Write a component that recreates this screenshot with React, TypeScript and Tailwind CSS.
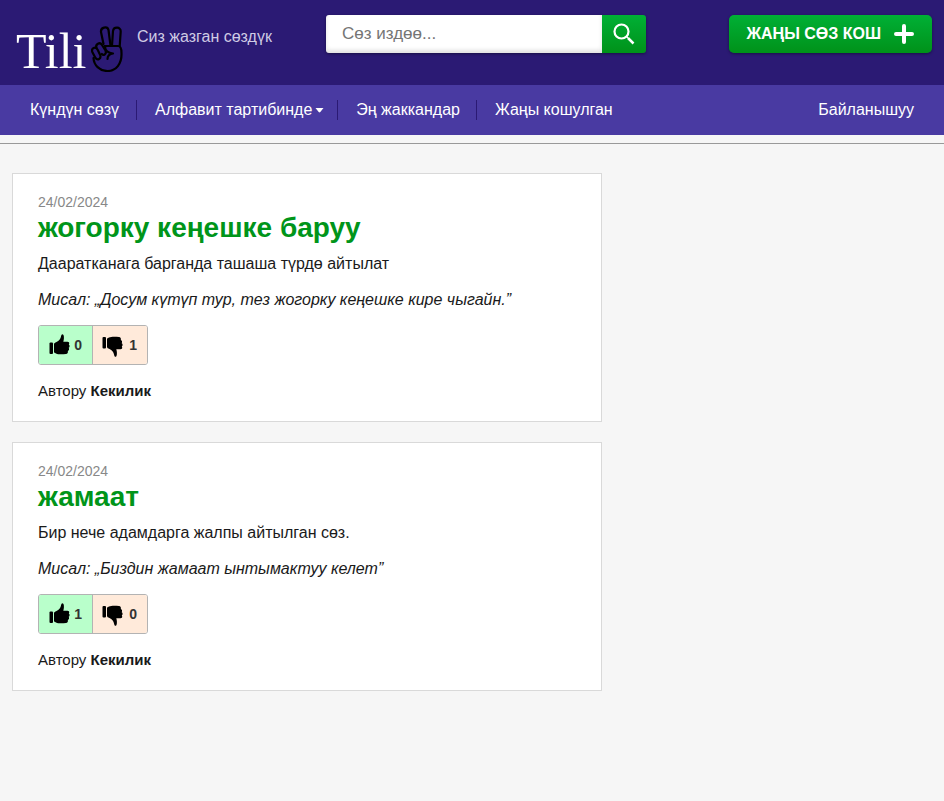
import React from 'react';

type Entry = {
  date: string;
  word: string;
  meaning: string;
  example: string;
  likes: number;
  dislikes: number;
  author: string;
};

const entries: Entry[] = [
  {
    date: '24/02/2024',
    word: 'жогорку кеңешке баруу',
    meaning: 'Дааратканага барганда ташаша түрдө айтылат',
    example: 'Мисал: „Досум күтүп тур, тез жогорку кеңешке кире чыгайн.”',
    likes: 0,
    dislikes: 1,
    author: 'Кекилик',
  },
  {
    date: '24/02/2024',
    word: 'жамаат',
    meaning: 'Бир нече адамдарга жалпы айтылган сөз.',
    example: 'Мисал: „Биздин жамаат ынтымактуу келет”',
    likes: 1,
    dislikes: 0,
    author: 'Кекилик',
  },
];

function VictoryHand() {
  return (
    <svg
      viewBox="0 0 32 46"
      className="h-[46px] w-8"
      fill="none"
      stroke="#000"
      strokeWidth="2.200"
      strokeLinecap="round"
      strokeLinejoin="round"
      aria-hidden="true"
    >
      <path d="M12.500 18 L10 6 C9.500 1 16.500 0 17.500 4 L19.500 19.500" />
      <path d="M21 19.500 L22 5 C22.500 0.500 30 0.500 29.700 5.500 L28.700 20" />
      <path d="M14 20 H27 C30 20 30.500 23 30.500 27 C31 38 25 45 16.500 45 C8.500 45 2.800 39 2.500 32" />
      <path d="M5.500 22 C4 18 9 15.500 11 19 L14.500 24.500 C16 28 12.500 30 10.800 28" />
      <path d="M1.300 26 C0 22 4.500 20 6.500 23.500 L9.200 29 C10.500 33 6.500 34.500 4.500 32 Z" />
      <path d="M14 20 C14 24 16 27 22 27.500 C18 28 16.500 30 16.500 33" />
    </svg>
  );
}

function Thumb({ down = false }: { down?: boolean }) {
  return (
    <svg
      viewBox="0 0 22 22"
      className={down ? 'mt-1 h-[22px] w-[22px] -scale-y-100' : 'mb-0.5 h-[22px] w-[22px]'}
      fill="#000"
      aria-hidden="true"
    >
      <path d="M1.500 9.500 H3 Q4 9.500 4 10.500 V20 Q4 21 3 21 H1.500 Q.5 21 .5 20 V10.500 Q.5 9.500 1.500 9.500Z" />
      <path d="M5 11.500 C5 10 6 9.500 7.500 9 C10 8 11.500 6 12 3.500 C12.500 1 13.500 0.500 14.500 2 C15.200 4 15 6.500 14.300 8.800 H18.500 C20 8.800 20.800 10 19.800 11.500 C21 12.500 20.800 14.300 19.700 14.800 C20.500 16.200 20 17.500 18.800 18 C19.300 19.500 18.500 20.800 17 21 C13 21.600 9 21.500 7 20.500 C5.500 19.900 5 19.500 5 18.500Z" />
    </svg>
  );
}

function EntryCard({ entry }: { entry: Entry }) {
  return (
    <article className="border border-[#d9d9d9] bg-white px-[25px] pt-[19px] pb-[18px]">
      <time className="block text-sm leading-[18px] text-[#888]">{entry.date}</time>
      <h2 className="mt-px text-[28px] leading-8 font-bold">
        <a href="#word" className="text-[#00951a]">{entry.word}</a>
      </h2>
      <p className="mt-2 leading-6">{entry.meaning}</p>
      <p className="mt-3 leading-6 italic">{entry.example}</p>
      <div className="mt-[13px] flex h-10 w-[110px] overflow-hidden rounded-[3px] border border-[#b3b3b3] text-sm font-bold text-[#333]">
        <button
          type="button"
          aria-label="Жакты"
          className="flex w-[54px] items-center justify-between border-r border-[#b3b3b3] bg-[#b9ffcb] px-[10px]"
        >
          <Thumb />
          {entry.likes}
        </button>
        <button
          type="button"
          aria-label="Жаккан жок"
          className="flex flex-1 items-center justify-between bg-[#ffeada] pr-[10px] pl-[9px]"
        >
          <Thumb down />
          {entry.dislikes}
        </button>
      </div>
      <p className="mt-[14px] text-[15px] leading-6">
        Автору <b>{entry.author}</b>
      </p>
    </article>
  );
}

export default function App() {
  return (
    <div className="min-h-screen bg-[#f6f6f6] font-['Liberation_Sans',Arial,sans-serif] text-base text-[#1a1a1a]">
      <header className="flex h-[85px] items-start bg-[#2b1a74] px-3">
        <a href="#home" className="mt-[26px] ml-1 flex w-[107px] shrink-0 items-start justify-between text-white">
          <span className="font-['Liberation_Serif',serif] text-[50px] leading-[50px]">Tili</span>
          <VictoryHand />
        </a>
        <p className="mt-[25px] ml-[14px] w-[189px] shrink-0 leading-6 text-[#cfcbe4]">Сиз жазган сөздүк</p>
        <form className="mt-[15px] flex h-[38px] w-80 shrink-0 overflow-hidden rounded-[3px] shadow-[0_1px_3px_rgba(0,0,0,0.4)]">
          <input
            type="search"
            aria-label="Сөз издөө"
            placeholder="Сөз издөө..."
            className="min-w-0 flex-1 bg-white px-4 text-[17px] shadow-[inset_0_-3px_4px_rgba(0,0,0,0.12)] outline-none placeholder:text-[#757575]"
          />
          <button
            type="submit"
            aria-label="Издөө"
            className="flex w-11 items-center justify-center bg-linear-to-b from-[#00b035] to-[#009219]"
          >
            <svg viewBox="0 0 22 22" className="h-[22px] w-[22px]" fill="none" stroke="#fff" aria-hidden="true">
              <circle cx="8.500" cy="8.500" r="7" strokeWidth="2.200" />
              <path d="M13.500 13.500 L15 15" strokeWidth="1.500" />
              <path d="M15 15 L20.500 20.500" strokeWidth="2.500" />
            </svg>
          </button>
        </form>
        <button
          type="button"
          className="mt-[15px] ml-auto flex h-[38px] shrink-0 items-center gap-[13px] rounded-[5px] bg-linear-to-b from-[#00b035] to-[#009219] px-[18px] font-bold text-white shadow-[0_1px_3px_rgba(0,0,0,0.4)]"
        >
          ЖАҢЫ СӨЗ КОШ
          <svg viewBox="0 0 20 20" className="h-5 w-5" stroke="#fff" strokeWidth="4" strokeLinecap="round" aria-hidden="true">
            <path d="M10 2 V18 M2 10 H18" />
          </svg>
        </button>
      </header>

      <nav className="flex h-[50px] items-center bg-[#493aa2] px-3 text-white">
        <a href="#day" className="border-r border-[#2b1a74] pr-[17px] pl-[18px] leading-5">Күндүн сөзү</a>
        <a href="#alphabet" className="flex items-center gap-[3px] border-r border-[#2b1a74] pr-[13px] pl-[18px] leading-5">
          Алфавит тартибинде
          <svg viewBox="0 0 9 5" className="h-[5px] w-[9px]" fill="#fff" aria-hidden="true">
            <path d="M0.500 0 H8.500 L5.300 4 Q4.500 4.800 3.700 4Z" />
          </svg>
        </a>
        <a href="#top" className="border-r border-[#2b1a74] pr-4 pl-[18px] leading-5">Эң жаккандар</a>
        <a href="#new" className="px-[18px] leading-5">Жаңы кошулган</a>
        <a href="#contact" className="ml-auto px-[18px] leading-5">Байланышуу</a>
      </nav>

      <hr className="mt-2 border-t border-[#999]" />

      <main className="mt-[29px] grid grid-cols-[minmax(0,590px)] gap-5 px-3 pb-10">
        {entries.map((entry) => (
          <EntryCard key={entry.word} entry={entry} />
        ))}
      </main>
    </div>
  );
}
